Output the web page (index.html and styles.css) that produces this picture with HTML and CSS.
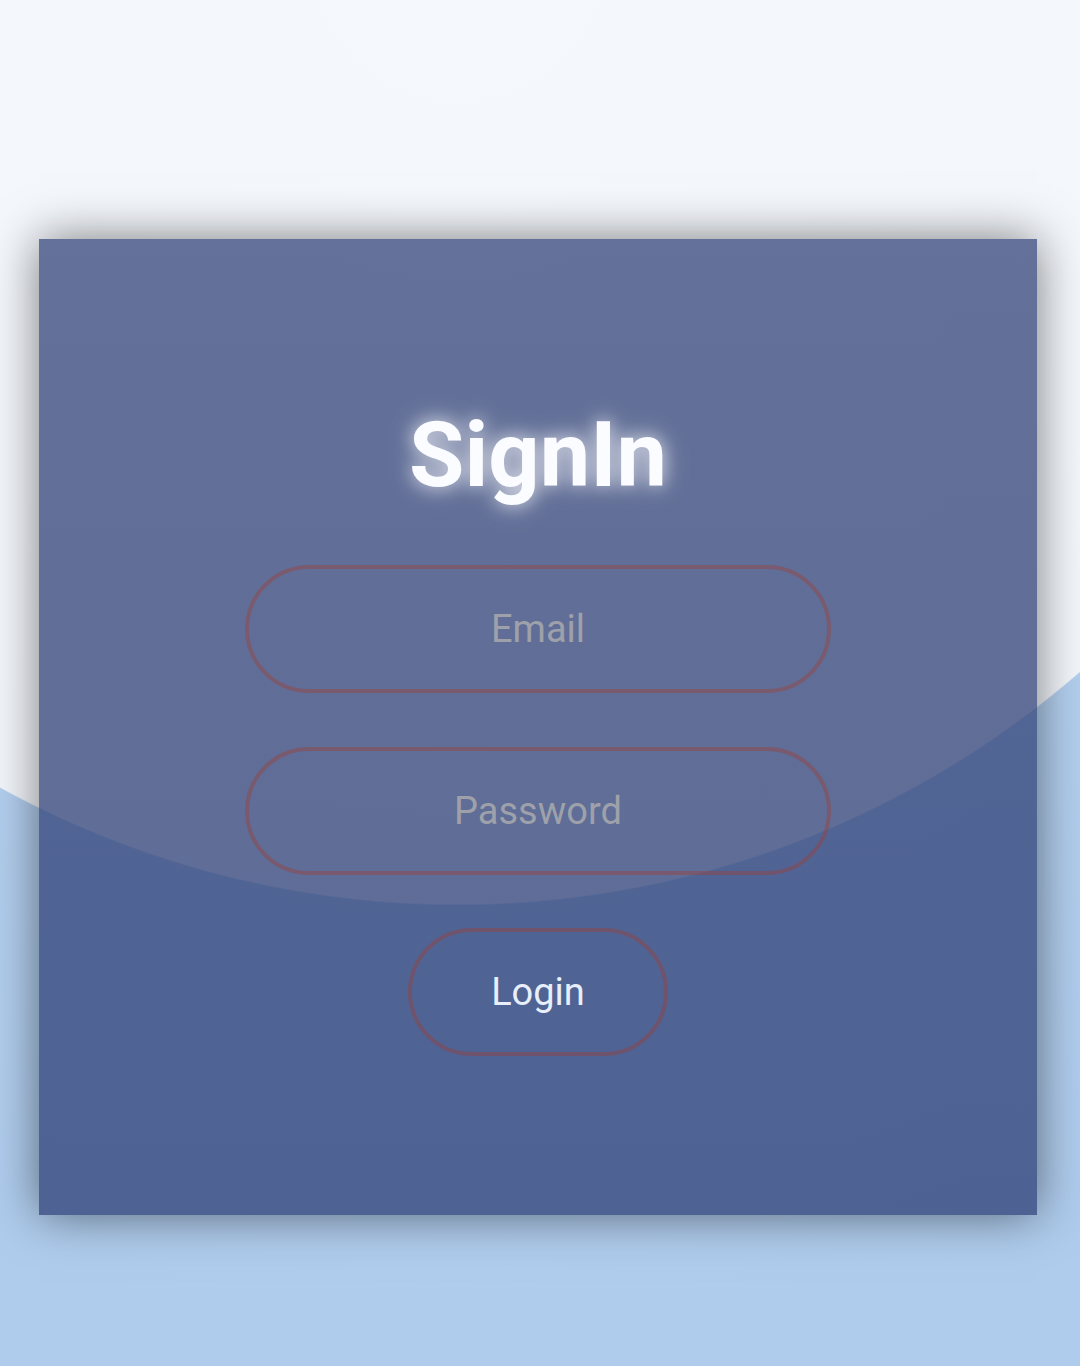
FILE: index.html
```html
<!DOCTYPE html>
<html lang="en">
<head>
<meta charset="utf-8">
<title>SignIn</title>
<link rel="stylesheet" href="styles.css">
</head>
<body>
  <main class="page">
    <form class="card" onsubmit="return false">
      <h1 class="title">SignIn</h1>
      <input class="field" type="email" placeholder="Email">
      <input class="field" type="password" placeholder="Password">
      <button class="login" type="submit">Login</button>
    </form>
  </main>
</body>
</html>
```
FILE: styles.css
```css
html, body {
  margin: 0;
  padding: 0;
}

body {
  width: 1080px;
  height: 1366px;
  overflow: hidden;
  font-family: Roboto, "Noto Sans", Arial, sans-serif;
  background:
    radial-gradient(circle 950px at 457px -45px, #f5f8fd 0, #f3f6fb 949px, #b3cfef 950.5px, #afcced 1400px);
}

.page {
  display: flex;
  justify-content: flex-start;
  padding: 239px 0 0 39px;
}

.card {
  box-sizing: border-box;
  width: 998px;
  height: 976px;
  display: flex;
  flex-direction: column;
  align-items: center;
  padding-top: 164px;
  background: linear-gradient(to bottom, rgba(55, 71, 122, 0.765), rgba(50, 68, 122, 0.78));
  box-shadow: 0 0 45px rgba(0, 0, 0, 0.5);
}

.title {
  margin: 0 0 57px;
  font-size: 90px;
  font-weight: 700;
  line-height: normal;
  color: #fbfcff;
  text-shadow: 0 0 18px rgba(255, 255, 255, 0.75), 0 0 30px rgba(255, 255, 255, 0.35);
}

.field,
.login {
  box-sizing: border-box;
  height: 128px;
  border: 4px solid rgba(160, 60, 50, 0.4);
  border-radius: 64px;
  background: transparent;
  font-family: Roboto, "Noto Sans", Arial, sans-serif;
  font-size: 38px;
  text-align: center;
  outline: none;
}

.field {
  width: 586px;
  margin-bottom: 54px;
  color: #e8eefa;
}

.field::placeholder {
  color: #9ea1aa;
  opacity: 1;
}

.login {
  width: 260px;
  margin-top: -1px;
  color: #e8eefa;
  cursor: pointer;
}
```
